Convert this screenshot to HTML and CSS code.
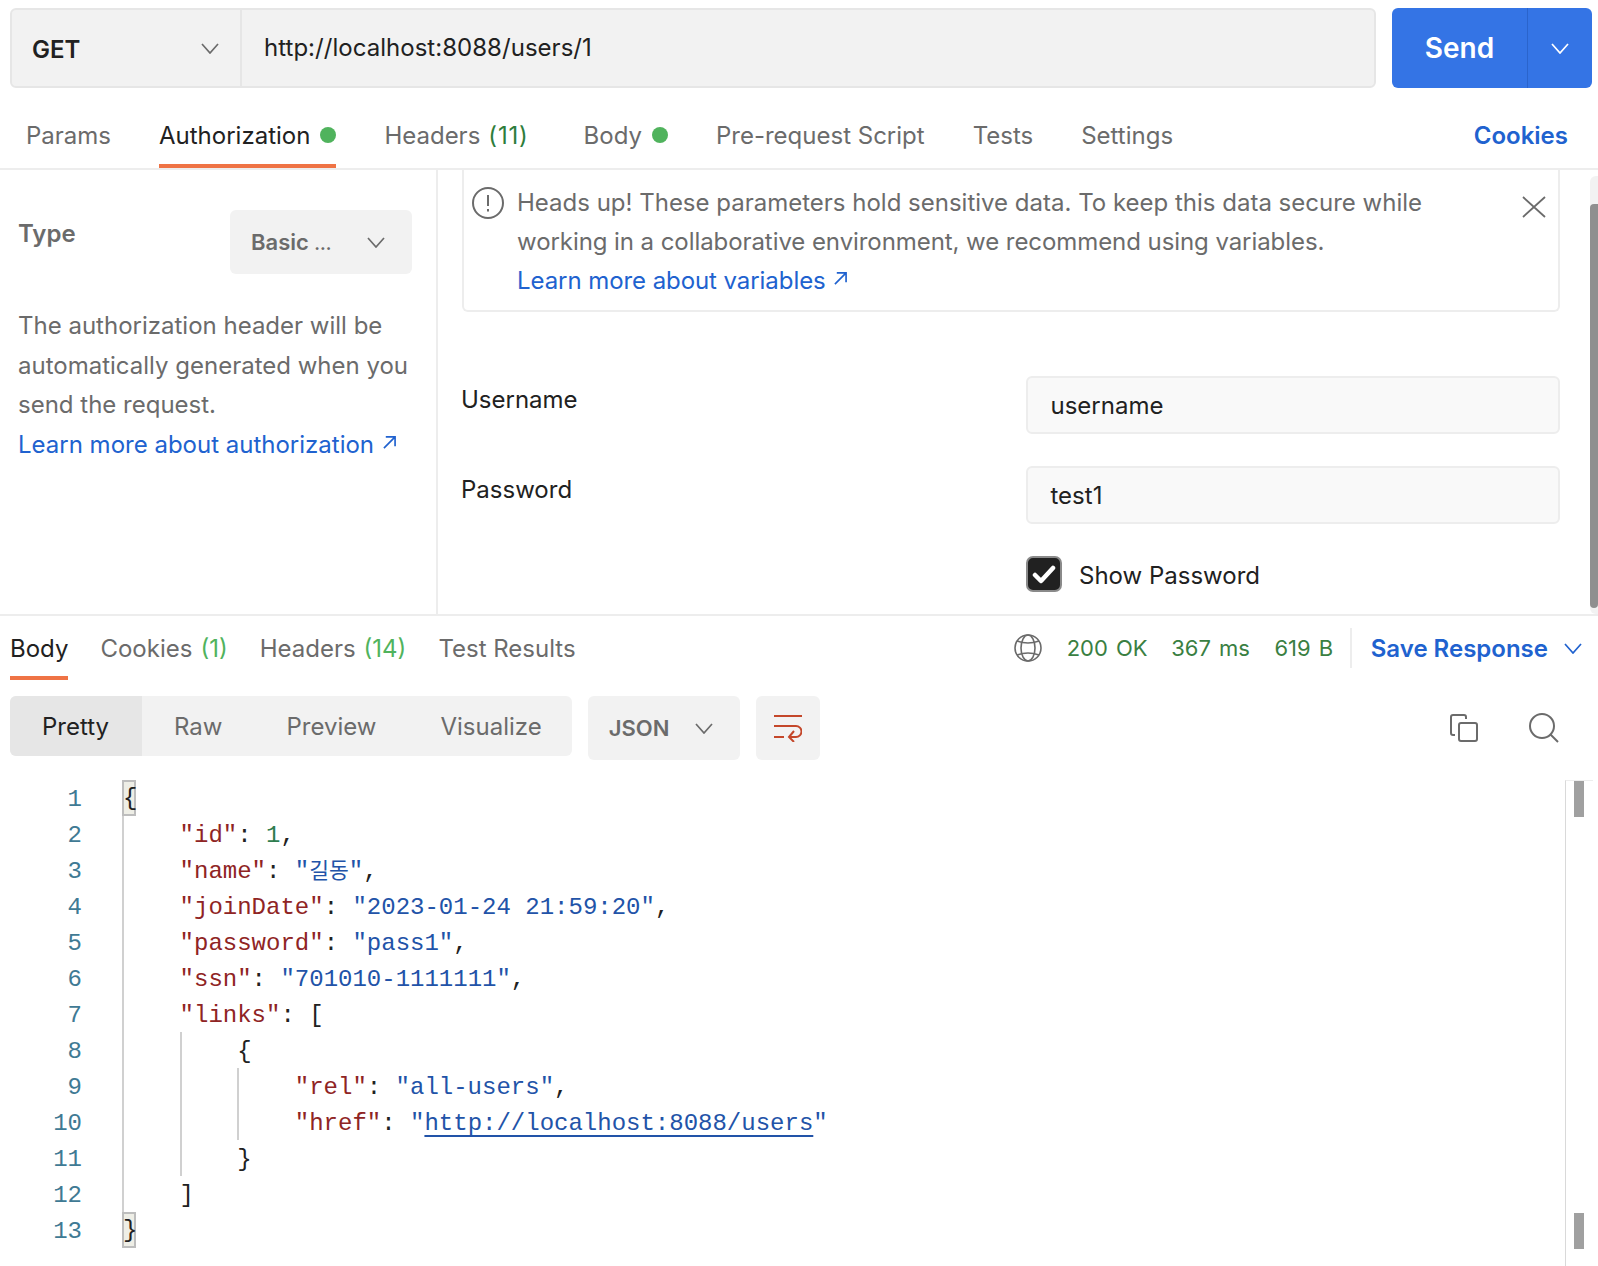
FILE: index.html
```html
<!DOCTYPE html>
<html>

<head>
    <meta charset="utf-8">
    <title>GET http://localhost:8088/users/1</title>
    <link rel="stylesheet" href="styles.css">
</head>

<body>
    <div class="request-bar">
        <div class="url-box">
            <div class="method">
                <span>GET</span>
                <svg class="chevron" viewBox="0 0 18 11"><path d="M1 1l8 9 8-9" /></svg>
            </div>
            <div class="url">http://localhost:8088/users/1</div>
        </div>
        <div class="send">
            <span class="send-label">Send</span>
            <span class="send-more"><svg class="chevron" viewBox="0 0 18 11"><path d="M1 1l8 9 8-9" /></svg></span>
        </div>
    </div>

    <div class="tabs req-tabs">
        <span class="tab">Params</span>
        <span class="tab active">Authorization <i class="dot"></i></span>
        <span class="tab headers-tab">Headers <em class="count-dark">(11)</em></span>
        <span class="tab">Body <i class="dot"></i></span>
        <span class="tab">Pre-request Script</span>
        <span class="tab">Tests</span>
        <span class="tab">Settings</span>
        <span class="tab cookies">Cookies</span>
    </div>

    <div class="auth">
        <div class="auth-left">
            <div class="type-row">
                <span class="type-label">Type</span>
                <div class="select basic">
                    <span>Basic <span class="dots">…</span></span>
                    <svg class="chevron" viewBox="0 0 18 11"><path d="M1 1l8 9 8-9" /></svg>
                </div>
            </div>
            <p class="help">The authorization header will be automatically generated when you send the request.<br>
                <a class="link">Learn more about authorization <svg class="ext" viewBox="0 0 14 14"><path d="M1 13L13 1M3 1h10v10" /></svg></a>
            </p>
        </div>
        <div class="auth-right">
            <div class="alert">
                <svg class="info" viewBox="0 0 32 32">
                    <circle cx="16" cy="16" r="15" />
                    <path d="M16 8v11M16 22v2.5" />
                </svg>
                <p>Heads up! These parameters hold sensitive data. To keep this data secure while<br>
                    <span class="tight">working in a collaborative environment, we recommend using variables.</span><br>
                    <a class="link tight">Learn more about variables <svg class="ext" viewBox="0 0 14 14"><path d="M1 13L13 1M3 1h10v10" /></svg></a>
                </p>
                <svg class="close" viewBox="0 0 24 22"><path d="M1 1l22 20M23 1L1 21" /></svg>
            </div>
            <div class="form">
                <label>Username</label>
                <div class="input">username</div>
                <label>Password</label>
                <div class="input">test1</div>
                <span></span>
                <div class="show-pass">
                    <span class="check"><svg viewBox="0 0 24 20"><path d="M3 11l6 6L21 4" /></svg></span>
                    <span class="show-label">Show Password</span>
                </div>
            </div>
        </div>
        <div class="scroll"><div class="scroll-thumb"></div></div>
    </div>

    <div class="tabs res-tabs">
        <span class="tab active">Body</span>
        <span class="tab">Cookies <em class="count">(1)</em></span>
        <span class="tab">Headers <em class="count">(14)</em></span>
        <span class="tab">Test Results</span>
        <div class="status">
            <svg class="globe" viewBox="0 0 28 28">
                <circle cx="14" cy="14" r="13" />
                <ellipse cx="14" cy="14" rx="7" ry="13" />
                <path d="M3 7q11 4 22 0M3 21q11-4 22 0" />
            </svg>
            <span class="ok ok-code">200 OK</span>
            <span class="ok">367 ms</span>
            <span class="ok">619 B</span>
            <span class="status-sep"></span>
            <span class="save">Save Response</span>
            <svg class="chevron blue" viewBox="0 0 18 11"><path d="M1 1l8 9 8-9" /></svg>
        </div>
    </div>

    <div class="toolbar">
        <div class="modes">
            <span class="mode on">Pretty</span>
            <span class="mode">Raw</span>
            <span class="mode">Preview</span>
            <span class="mode">Visualize</span>
        </div>
        <div class="select json">
            <span>JSON</span>
            <svg class="chevron" viewBox="0 0 18 11"><path d="M1 1l8 9 8-9" /></svg>
        </div>
        <div class="wrap-btn">
            <svg viewBox="0 0 28 27"><path d="M0 1h28M0 11h22a5.5 5.5 0 0 1 0 11h-6M0 22h10M20 16l-5 6 5 5" /></svg>
        </div>
        <div class="tools">
            <svg class="copy" viewBox="0 0 28 28">
                <path d="M5 21H3a2 2 0 0 1-2-2V3a2 2 0 0 1 2-2h11a2 2 0 0 1 2 2v2" />
                <rect x="9" y="9" width="18" height="18" rx="2" />
            </svg>
            <svg class="search" viewBox="0 0 30 30">
                <circle cx="13" cy="13" r="12" />
                <path d="M21.5 21.5L29 29" />
            </svg>
        </div>
    </div>

    <div class="viewer">
        <div class="gutter">
            <div>1</div><div>2</div><div>3</div><div>4</div><div>5</div><div>6</div><div>7</div>
            <div>8</div><div>9</div><div>10</div><div>11</div><div>12</div><div>13</div>
        </div>
        <div class="code">
            <div class="line brace-line"><span class="match">{</span></div>
            <div class="block">
                <div class="line"><b class="key">"id"</b>: <b class="num">1</b>,</div>
                <div class="line"><b class="key">"name"</b>: <b class="str">"<span class="kr">길동</span>"</b>,</div>
                <div class="line"><b class="key">"joinDate"</b>: <b class="str">"2023-01-24 21:59:20"</b>,</div>
                <div class="line"><b class="key">"password"</b>: <b class="str">"pass1"</b>,</div>
                <div class="line"><b class="key">"ssn"</b>: <b class="str">"701010-1111111"</b>,</div>
                <div class="line"><b class="key">"links"</b>: [</div>
                <div class="block guide">
                    <div class="line">{</div>
                    <div class="block guide">
                        <div class="line"><b class="key">"rel"</b>: <b class="str">"all-users"</b>,</div>
                        <div class="line"><b class="key">"href"</b>: <b class="str">"<u class="url-val">http://localhost:8088/users</u>"</b></div>
                    </div>
                    <div class="line">}</div>
                </div>
                <div class="line">]</div>
            </div>
            <div class="line brace-line"><span class="match">}</span></div>
        </div>
        <div class="overview">
            <span class="mark mark-top"></span>
            <span class="mark mark-bottom"></span>
        </div>
    </div>
</body>

</html>
```
FILE: styles.css
```css
html,
body {
    margin: 0;
    height: 100%;
    overflow: hidden;
}

body {
    font-family: "Inter", "Liberation Sans", sans-serif;
    font-size: 24px;
    color: #212121;
    background: white;
}

svg {
    display: block;
    flex: none;
    fill: none;
}

p {
    margin: 0;
}

em {
    font-style: normal;
    margin-left: -2px;
}

.chevron {
    width: 18px;
    height: 11px;
    stroke: #6b6b6b;
    stroke-width: 1.7;
}

.chevron.blue {
    stroke: #2062cf;
}

.link {
    color: #2062cf;
}

.tight {
    letter-spacing: -.07px;
}

.ext {
    display: inline-block;
    width: 13px;
    height: 13px;
    margin-left: 2px;
    vertical-align: 4px;
    stroke: #2062cf;
    stroke-width: 1.8;
}

/* request bar */
.request-bar {
    display: flex;
    gap: 16px;
    padding: 8px 6px 0 10px;
    height: 80px;
}

.url-box {
    flex: 1;
    display: flex;
    background: #f2f2f2;
    border: 2px solid #e6e6e6;
    border-radius: 6px;
}

.method {
    width: 230px;
    border-right: 2px solid #e6e6e6;
    display: flex;
    align-items: center;
    justify-content: space-between;
    padding: 2px 21px 0 20px;
    box-sizing: border-box;
    font-weight: 600;
}

.method .chevron {
    margin-top: -2px;
}

.url {
    padding: 0 0 2px 22px;
    display: flex;
    align-items: center;
    letter-spacing: .03px;
}

.send {
    width: 200px;
    display: flex;
    background: #3474e5;
    border-radius: 6px;
    color: white;
    font-size: 28px;
    font-weight: 600;
}

.send-label {
    width: 135px;
    display: flex;
    align-items: center;
    justify-content: center;
    border-right: 1px solid #2a64cc;
}

.send-more {
    flex: 1;
    display: flex;
    align-items: center;
    justify-content: center;
}

.send-more .chevron {
    stroke: white;
}

/* tabs */
.tabs {
    display: flex;
    align-items: flex-end;
}

.tab {
    display: flex;
    align-items: center;
    gap: 10px;
    height: 32px;
    padding: 24px 0 12px;
    border-bottom: 4px solid transparent;
    color: #6b6b6b;
    white-space: nowrap;
}

.tab.active {
    color: #212121;
    border-bottom-color: #ef7345;
}

.dot {
    width: 16px;
    height: 16px;
    border-radius: 50%;
    background: #50b35d;
}

.count-dark {
    color: #2e7d3c;
    letter-spacing: .8px;
}

.count {
    color: #50b35d;
}

.req-tabs {
    margin-top: 8px;
    gap: 48px;
    padding: 0 30px 0 26px;
    border-bottom: 2px solid #ededed;
}

.req-tabs .tab {
    padding: 23px 0 13px;
}

.headers-tab {
    margin-right: 7px;
}

.cookies {
    margin-left: auto;
    color: #2062cf;
    font-weight: 600;
}

/* auth panel */
.auth {
    display: flex;
    height: 444px;
    border-bottom: 2px solid #ededed;
}

.auth-left {
    width: 438px;
    box-sizing: border-box;
    padding: 40px 18px 0;
    border-right: 2px solid #ededed;
    flex: none;
}

.type-row {
    display: flex;
    justify-content: space-between;
    align-items: flex-start;
    margin-right: 6px;
}

.type-label {
    font-weight: 600;
    color: #6b6b6b;
    margin-top: 9px;
}

.select {
    display: flex;
    align-items: center;
    justify-content: space-between;
    background: #f2f2f2;
    border-radius: 6px;
    box-sizing: border-box;
    height: 64px;
    color: #6b6b6b;
    font-size: 22px;
    font-weight: 600;
}

.basic {
    width: 182px;
    padding: 0 27px 0 21px;
}

.dots {
    font-size: 18px;
}

.help {
    margin-top: 32px;
    width: 405px;
    line-height: 39.5px;
    color: #6b6b6b;
}

.auth-right {
    flex: 1;
    padding: 0 30px 0 24px;
}

.alert {
    display: flex;
    height: 142px;
    box-sizing: border-box;
    border: 2px solid #ededed;
    border-top: none;
    border-radius: 0 0 6px 6px;
    padding: 13px 12px 0 8px;
    color: #6b6b6b;
    line-height: 39px;
}

.alert p {
    flex: 1;
    margin-left: 13px;
    white-space: nowrap;
}

.info {
    width: 32px;
    height: 32px;
    margin-top: 4px;
    stroke: #6b6b6b;
    stroke-width: 2;
}

.close {
    width: 24px;
    height: 22px;
    margin-top: 13px;
    stroke: #6b6b6b;
    stroke-width: 1.8;
}

.form {
    display: grid;
    grid-template-columns: 564px 1fr;
    row-gap: 32px;
    margin-top: 64px;
    color: #212121;
}

.form label {
    margin: 9px 0 0 -1px;
}

.input {
    height: 58px;
    box-sizing: border-box;
    background: #f9f9f9;
    border: 2px solid #ededed;
    border-radius: 6px;
    padding: 0 22.5px;
    display: flex;
    align-items: center;
}

.show-pass {
    display: flex;
    align-items: center;
    gap: 17px;
}

.show-label {
    padding-top: 2px;
}

.check {
    width: 36px;
    height: 36px;
    box-sizing: border-box;
    background: #212121;
    border: 2px solid #8a8a8a;
    border-radius: 7px;
    display: flex;
    align-items: center;
    justify-content: center;
}

.check svg {
    width: 24px;
    height: 20px;
    stroke: white;
    stroke-width: 4.5;
    stroke-linecap: round;
    stroke-linejoin: round;
}

.scroll {
    width: 8px;
    flex: none;
    background: #f2f2f2;
    border-radius: 6px 0 0 6px;
    padding-top: 28px;
    box-sizing: border-box;
    margin-top: 6px;
}

.scroll-thumb {
    height: 404px;
    background: #8f8f8f;
    border-radius: 6px 0 6px 6px;
}

/* response */
.res-tabs {
    gap: 32px;
    padding: 0 16px 0 10px;
    height: 64px;
}

.res-tabs .tab {
    padding-top: 16px;
}

.status {
    margin-left: auto;
    display: flex;
    align-items: center;
    height: 64px;
    align-self: flex-start;
}

.globe {
    width: 28px;
    height: 28px;
    margin-right: 25px;
    stroke: #6b6b6b;
    stroke-width: 1.6;
}

.ok {
    color: #3a7f42;
    margin-right: 24.5px;
    font-size: 22px;
    word-spacing: 2px;
}

.ok-code {
    margin-right: 23.5px;
}

.status-sep {
    width: 2px;
    height: 40px;
    background: #ededed;
    margin: 0 19px 0 -8px;
}

.save {
    color: #2062cf;
    font-weight: 600;
    margin-right: 16px;
}

.toolbar {
    display: flex;
    align-items: flex-start;
    gap: 16px;
    margin-top: 16px;
    padding: 0 39px 0 10px;
    height: 64px;
}

.modes {
    display: flex;
    background: #f2f2f2;
    border-radius: 6px;
    height: 60px;
    color: #6b6b6b;
    line-height: 61px;
    overflow: hidden;
}

.mode {
    padding: 0 32px;
}

.mode.on {
    background: #e6e6e6;
    color: #212121;
    padding-right: 33px;
}

.mode:last-child {
    padding-right: 30px;
}

.json {
    width: 152px;
    padding: 0 27px 0 21px;
}

.wrap-btn {
    width: 64px;
    height: 64px;
    background: #f2f2f2;
    border-radius: 6px;
    display: flex;
    align-items: center;
    justify-content: center;
}

.wrap-btn svg {
    width: 28px;
    height: 27px;
    stroke: #c4472a;
    stroke-width: 2;
}

.tools {
    margin-left: auto;
    display: flex;
    align-items: center;
    gap: 51px;
    height: 64px;
}

.copy {
    width: 28px;
    height: 28px;
    stroke: #6b6b6b;
    stroke-width: 2;
}

.search {
    width: 30px;
    height: 30px;
    stroke: #6b6b6b;
    stroke-width: 2;
}

/* code viewer */
.viewer {
    display: flex;
    margin-top: 20px;
    height: 486px;
    font-family: "Liberation Mono", monospace;
    line-height: 36px;
}

.gutter {
    width: 82px;
    margin-right: 40px;
    padding-top: 2px;
    text-align: right;
    color: #3f7a94;
    flex: none;
}

.code {
    flex: 1;
    align-self: flex-start;
    border-left: 2px solid #d0d0d0;
}

.line {
    height: 36px;
    box-sizing: border-box;
    padding-top: 2px;
    white-space: pre;
}

.line.brace-line {
    padding-top: 0;
}

.line b {
    font-weight: normal;
}

.block {
    padding-left: 55.6px;
}

.block.guide {
    border-left: 2px solid #d0d0d0;
    padding-left: 55.6px;
}

.match {
    display: block;
    width: 14px;
    height: 36px;
    margin-left: -2px;
    box-sizing: border-box;
    background: #eeeee6;
    border: 2px solid #bdbdbd;
    line-height: 34px;
    text-indent: -1px;
}

.key {
    color: #8f2424;
}

.str {
    color: #2253a8;
}

.num {
    color: #2f7d4f;
}

.kr {
    font-family: "Noto Sans CJK KR", sans-serif;
    font-size: 21.5px;
    line-height: 0;
}

.url-val {
    text-decoration: underline;
    text-decoration-thickness: 2px;
    text-underline-offset: 5px;
}

.overview {
    position: relative;
    width: 28px;
    margin-right: 5px;
    flex: none;
    border-left: 1px solid #d9d9d9;
    border-top: 1px solid #ededed;
    box-sizing: border-box;
}

.mark {
    position: absolute;
    left: 8px;
    width: 10px;
    height: 36px;
    background: #a0a0a0;
}

.mark-top {
    top: 0;
}

.mark-bottom {
    top: 432px;
}
```
